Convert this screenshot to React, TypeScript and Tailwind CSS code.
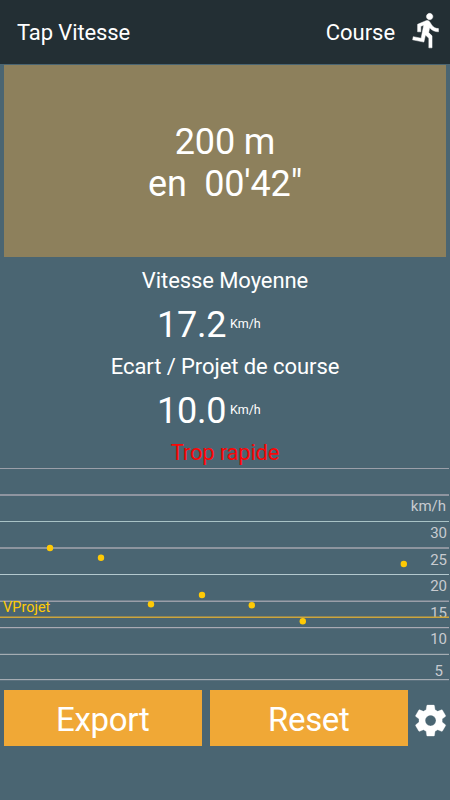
const GRID_LINES = [
  { y: 3, h: 1, color: '#9b9fa9' },
  { y: 29, h: 2, color: '#8f95a0' },
  { y: 56, h: 1, color: '#a9c3c6' },
  { y: 82, h: 2, color: '#8d959f' },
  { y: 109, h: 1, color: '#b4c9cf' },
  { y: 135.5, h: 1.5, color: '#9a9ea8' },
  { y: 162, h: 1.2, color: '#a9aab3' },
  { y: 188.8, h: 1.2, color: '#a4adb3' },
  { y: 214, h: 1.2, color: '#a5acb3' },
]

const LABELS = [
  { text: 'km/h', x: 446, y: 46 },
  { text: '30', x: 447, y: 73 },
  { text: '25', x: 447, y: 99.5 },
  { text: '20', x: 447, y: 126 },
  { text: '15', x: 447, y: 152.5 },
  { text: '10', x: 447, y: 179 },
  { text: '5', x: 443, y: 210.5 },
]

const SPEEDS = [
  { x: 50, y: 83 },
  { x: 101, y: 92.7 },
  { x: 151, y: 139.3 },
  { x: 202, y: 130 },
  { x: 251.8, y: 140.3 },
  { x: 302.8, y: 156.3 },
  { x: 403.8, y: 99 },
]

interface SpeedRowProps {
  label: string
  value: string
}

function SpeedRow({ label, value }: SpeedRowProps) {
  return (
    <div className="flex h-[86px] flex-col">
      <p className="h-[35px] text-center text-[22px] leading-[34px] tracking-[-0.08px]">{label}</p>
      <div className="flex h-[51px] items-center pt-px pl-[157px]">
        <span className="w-[73px] text-[36px] leading-[50px] tracking-[-0.2px]">{value}</span>
        <span className="mb-[2px] text-[12.5px]">Km/h</span>
      </div>
    </div>
  )
}

function SpeedChart() {
  return (
    <svg width="450" height="225" viewBox="0 0 450 225" className="block shrink-0">
      {GRID_LINES.map((l) => (
        <rect key={l.y} x="0" y={l.y} width="449" height={l.h} fill={l.color} />
      ))}
      {LABELS.map((l) => (
        <text key={l.text} x={l.x} y={l.y} textAnchor="end" fontSize="15" fill="#c8cbd0">
          {l.text}
        </text>
      ))}
      <rect x="0" y="151.5" width="449" height="1.5" fill="#cda53c" />
      <text x="3" y="147" fontSize="14.5" fill="#ffca05">
        VProjet
      </text>
      {SPEEDS.map((s) => (
        <circle key={s.x} cx={s.x} cy={s.y} r="3.2" fill="#ffca05" />
      ))}
    </svg>
  )
}

function RunnerIcon({ className }: { className?: string }) {
  return (
    <svg viewBox="0 0 24 24" fill="currentColor" stroke="currentColor" strokeWidth="0.3" className={className}>
      <path d="M13.49 5.48c1.1 0 2-.9 2-2s-.9-2-2-2-2 .9-2 2 .9 2 2 2zm-3.6 13.9l1-4.4 2.1 2v6h2v-7.5l-2.1-2 .6-3c1.3 1.5 3.3 2.5 5.5 2.5v-2c-1.9 0-3.5-1-4.3-2.4l-1-1.6c-.4-.6-1-1-1.7-1-.3 0-.5.1-.8.1l-5.2 2.2v4.7h2v-3.4l1.8-.7-1.6 8.1-4.9-1-.4 2 7 1.4z" />
    </svg>
  )
}

function GearIcon({ className }: { className?: string }) {
  return (
    <svg viewBox="0 0 24 24" fill="currentColor" stroke="currentColor" strokeWidth="0.2" className={className}>
      <path d="M19.43 12.98c.04-.32.07-.64.07-.98s-.03-.66-.07-.98l2.11-1.65c.19-.15.24-.42.12-.64l-2-3.46c-.12-.22-.39-.3-.61-.22l-2.49 1c-.52-.4-1.08-.73-1.69-.98l-.38-2.65C14.46 2.18 14.25 2 14 2h-4c-.25 0-.46.18-.49.42l-.38 2.65c-.61.25-1.17.59-1.69.98l-2.49-1c-.23-.09-.49 0-.61.22l-2 3.46c-.13.22-.07.49.12.64l2.11 1.65c-.04.32-.07.65-.07.98s.03.66.07.98l-2.11 1.65c-.19.15-.24.42-.12.64l2 3.46c.12.22.39.3.61.22l2.49-1c.52.4 1.08.73 1.69.98l.38 2.65c.03.24.24.42.49.42h4c.25 0 .46-.18.49-.42l.38-2.65c.61-.25 1.17-.59 1.69-.98l2.49 1c.23.09.49 0 .61-.22l2-3.46c.12-.22.07-.49-.12-.64l-2.11-1.65zM12 15.5c-1.93 0-3.5-1.57-3.5-3.5s1.57-3.5 3.5-3.5 3.5 1.57 3.5 3.5-1.57 3.5-3.5 3.5z" />
    </svg>
  )
}

export default function App() {
  return (
    <div className="flex h-[800px] w-[450px] flex-col overflow-hidden bg-[#4a6572] font-[Roboto,sans-serif] text-white">
      <header className="flex h-16 shrink-0 items-center bg-[#232f34] pl-[17px] text-[22px]">
        <h1 className="flex-1 tracking-[-0.1px]">Tap Vitesse</h1>
        <span className="mr-[13px] tracking-[-0.05px]">Course</span>
        <RunnerIcon className="mr-[3.5px] mb-[3px] size-[38.5px]" />
      </header>

      <button
        type="button"
        className="mx-1 mt-px h-[192px] shrink-0 bg-[#8d805c] pt-[3px] text-[36px] leading-[42px] tracking-[-0.15px] whitespace-pre"
      >
        {"200 m\nen  00'42\""}
      </button>

      <section className="mt-[7px] flex shrink-0 flex-col">
        <SpeedRow label="Vitesse Moyenne" value="17.2" />
        <SpeedRow label="Ecart / Projet de course" value="10.0" />
        <p className="h-[29px] text-center text-[22px] leading-[34px] tracking-[-0.2px] text-[#fb0606]">Trop rapide</p>
      </section>

      <SpeedChart />

      <footer className="flex shrink-0 items-start pl-1">
        <button type="button" className="h-[56px] w-[197.5px] bg-[#f0a836] pt-[3px] text-[33px] tracking-[-0.3px]">
          Export
        </button>
        <button type="button" className="ml-2 h-[56px] w-[198.5px] bg-[#f0a836] pt-[3px] text-[33px] tracking-[-0.3px]">
          Reset
        </button>
        <GearIcon className="mt-[12px] ml-[4.3px] size-[37.2px]" />
      </footer>
    </div>
  )
}
